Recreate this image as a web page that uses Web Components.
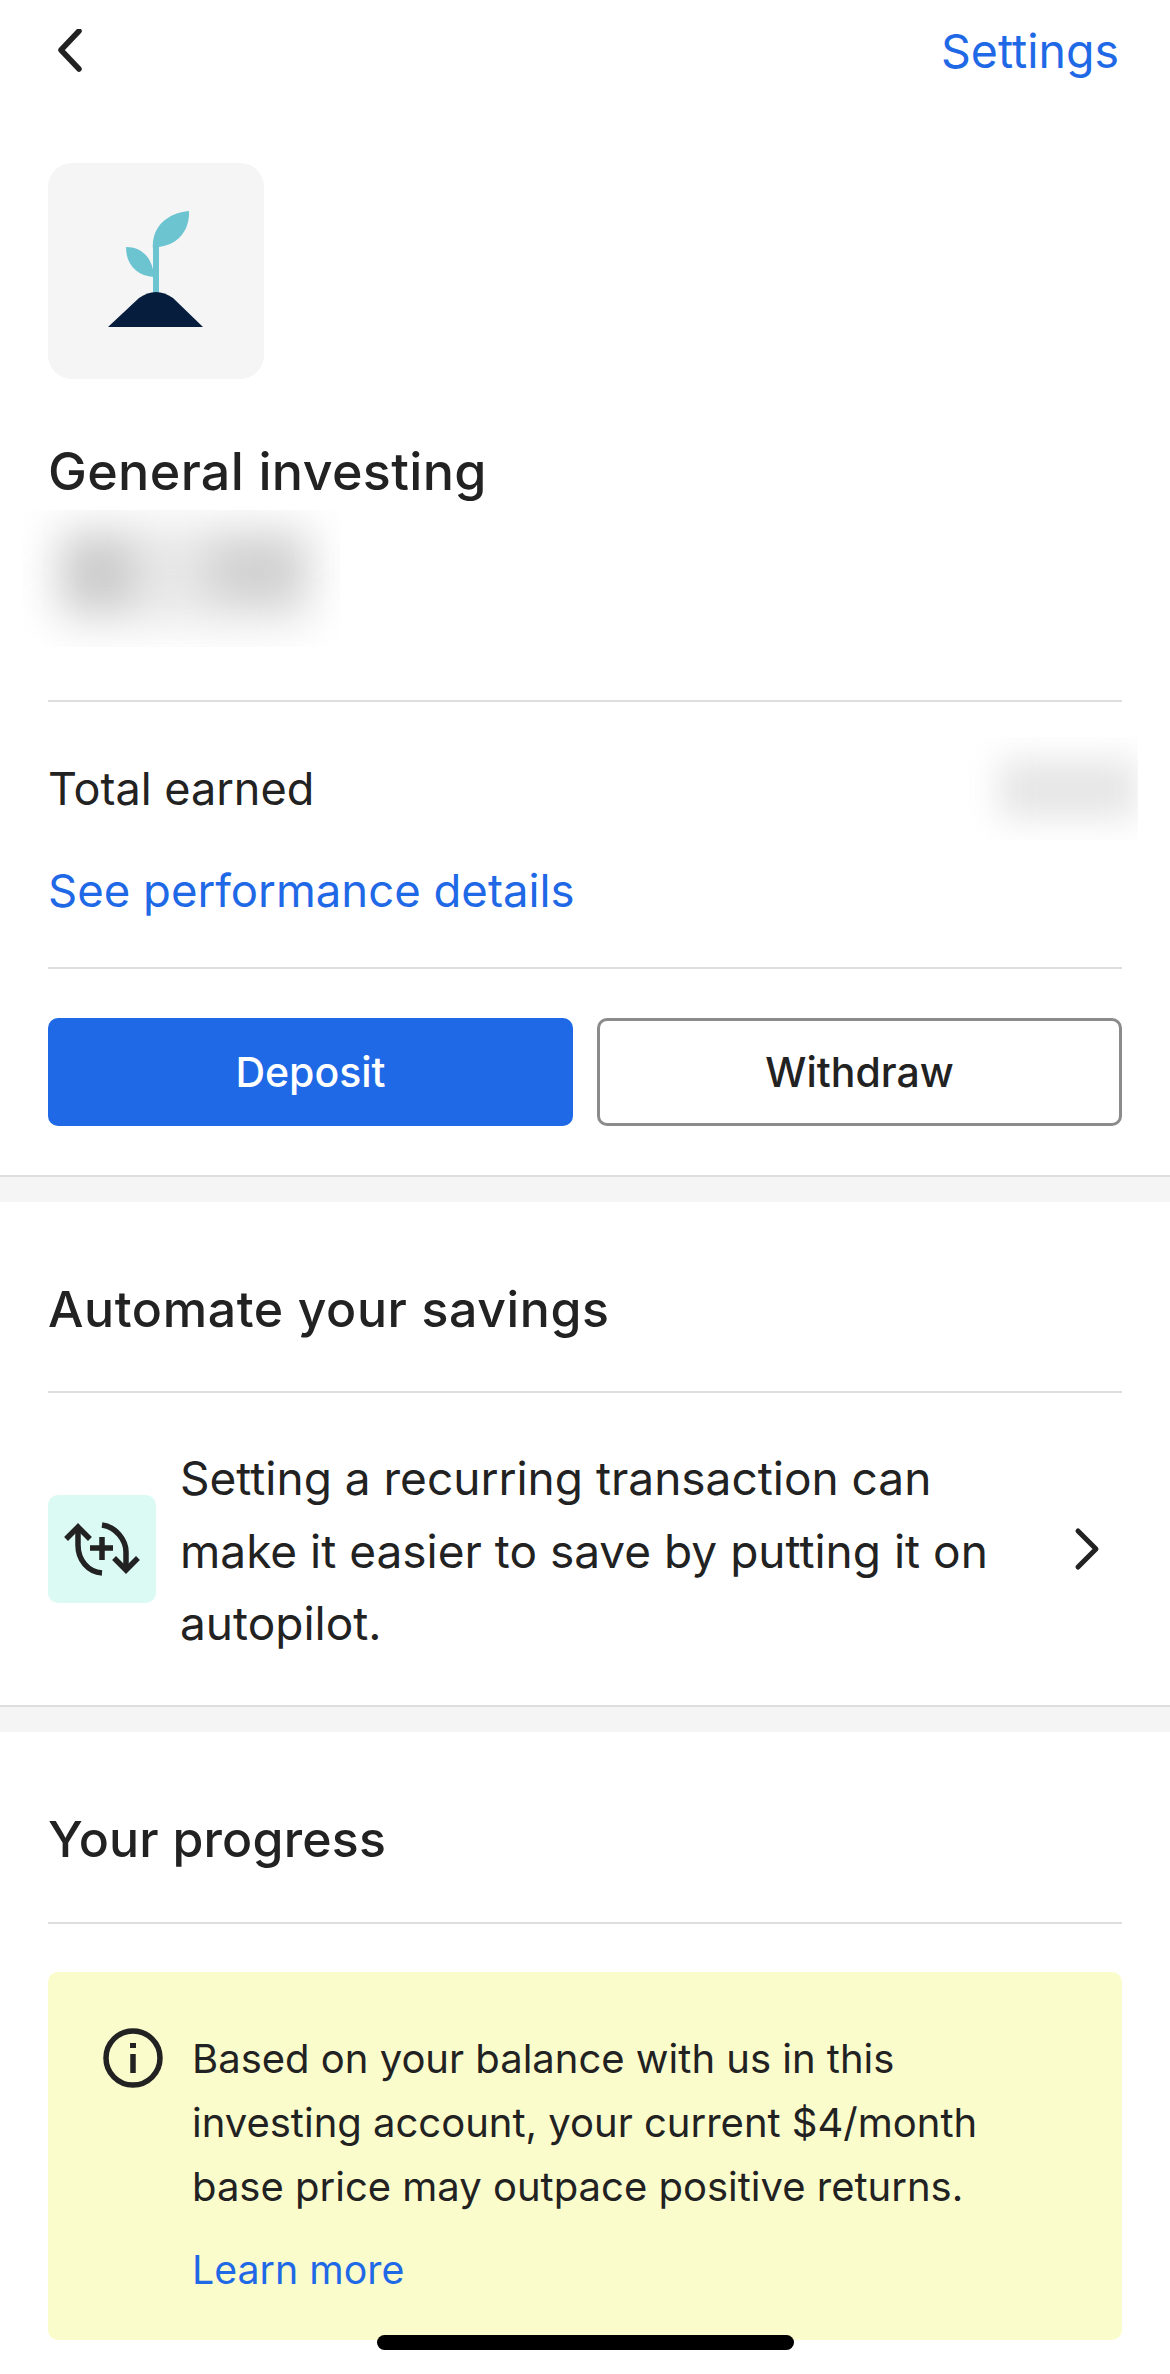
<!DOCTYPE html>
<html><head><meta charset="utf-8"><style>
html,body{margin:0;padding:0;background:#fff}
body{font-family:"Inter","Liberation Sans",sans-serif;color:#222}
</style></head><body>
<x-app>
  <x-nav></x-nav>
  <x-summary></x-summary>
  <x-band></x-band>
  <x-automate></x-automate>
  <x-band></x-band>
  <x-progress></x-progress>
</x-app>
<script>
const base=`*{box-sizing:border-box}
.rule{height:2px;background:#dedede}
.h{font-size:50px;font-weight:500;line-height:60px;color:#222;margin:0;letter-spacing:.6px}
.link{color:#1f69e6}`;
function def(name,html,css){
  customElements.define(name,class extends HTMLElement{
    constructor(){super();const r=this.attachShadow({mode:'open'});
      r.innerHTML=`<style>${base}${css}</style>${html}`;}
  });
}
def('x-app',`<slot></slot><div class="home"></div>`,`
:host{display:flex;flex-direction:column;width:1170px;height:2374px;overflow:hidden;position:relative;background:#fff}
.home{position:absolute;left:377px;top:2335px;width:417px;height:15px;border-radius:8px;background:#000;z-index:2}`);
def('x-nav',`<svg width="34" height="44" viewBox="0 0 34 44"><path d="M28 5 L10 24 L28 43" transform="translate(-1 -3)" fill="none" stroke="#222" stroke-width="5.5" stroke-linecap="round" stroke-linejoin="round"/></svg><span class="link">Settings</span>`,`
:host{display:flex;align-items:center;justify-content:space-between;box-sizing:border-box;height:103px;padding:0 51px 2px 52px;flex:none;font-size:46.5px}`);
def('x-summary',`
<div class="tile"><svg width="216" height="216" viewBox="48 163 216 216">
<rect x="153" y="245" width="6" height="55" fill="#6bc4d0"/>
<path d="M153 250C151 226 168 213 189 211C190 232 176 246 157 247Z" fill="#6bc4d0"/>
<path d="M126 247C142 247 153 258 154 277C137 276 126 265 126 247Z" fill="#6bc4d0"/>
<path d="M108 327L139 298Q156 286 173 298L203 327Z" fill="#071d3d"/></svg></div>
<h2 class="h title">General investing</h2>
<div class="bal"><i></i></div>
<div class="rule r1"></div>
<div class="row"><span>Total earned</span><div class="earn"><i></i></div></div>
<div class="see link">See performance details</div>
<div class="rule r2"></div>
<div class="btns"><x-btn primary>Deposit</x-btn><x-btn>Withdraw</x-btn></div>`,`
:host{display:block;padding:0 48px;flex:none;height:1072px}
.tile{width:216px;height:216px;margin-top:60px;background:#f5f5f5;border-radius:24px}
svg{display:block}
.title{margin-top:63px;font-size:52px;letter-spacing:.35px}
.bal,.earn{overflow:hidden}
.bal i,.earn i{display:block;width:100%;height:100%}
.bal{margin:8px 0 0 -25px;width:317px;height:137px}
.bal i{filter:blur(22px);background:
 linear-gradient(#cacaca,#cacaca) 38px 28px/72px 70px no-repeat,
 linear-gradient(#d0d0d0,#d0d0d0) 186px 28px/100px 64px no-repeat,
 linear-gradient(#e8e8e8,#e8e8e8) 36px 14px/250px 100px no-repeat}
.r1{margin-top:53px}
.row{margin-top:35px;height:103px;display:flex;align-items:center;justify-content:space-between;font-size:45px;margin-right:-16px}
.earn{width:175px;height:103px}
.earn i{filter:blur(17px);background:
 linear-gradient(#e6e6e6,#e6e6e6) 36px 22px/139px 60px no-repeat}
.see{font-size:45.5px;line-height:60px;margin-top:21px}
.r2{margin-top:46px}
.btns{margin-top:49px;display:grid;grid-template-columns:525px 525px;gap:24px}`);
def('x-btn',`<slot></slot>`,`
:host{display:flex;align-items:center;justify-content:center;height:108px;border-radius:10px;border:3px solid #8b8b8b;background:#fff;color:#222;font-size:41px;font-weight:500;box-sizing:border-box}
:host([primary]){background:#1f69e6;border-color:#1f69e6;color:#fff}`);
def('x-band',``,`:host{display:block;height:27px;background:#f5f5f5;border-top:2px solid #dedede;flex:none;box-sizing:border-box}`);
def('x-automate',`
<h2 class="h">Automate your savings</h2>
<div class="rule"></div>
<div class="body">
 <div class="ic"><svg width="108" height="108" viewBox="48 1495 108 108" fill="none" stroke="#222" stroke-width="5.5">
  <path d="M78 1527V1545C78 1560 88 1572 102 1573"/>
  <path d="M68 1537L78 1527L88 1537" stroke-linecap="square"/>
  <path d="M102 1525C116 1527 126 1540 126 1552V1568"/>
  <path d="M116 1560L126 1570L136 1560" stroke-linecap="square"/>
  <path d="M90 1548H113M102 1537V1560"/>
 </svg></div>
 <p>Setting a recurring transaction can make it easier to save by putting it on autopilot.</p>
 <svg class="chev" width="28" height="44" viewBox="0 0 28 44" fill="none" stroke="#222" stroke-width="5" stroke-linecap="round" stroke-linejoin="round"><path d="M5 4L23 22L5 40"/></svg>
</div>`,`
:host{display:block;padding:0 48px;flex:none;height:503px}
.h{margin-top:77px}
.rule{margin-top:52px}
.body{display:flex;align-items:center;height:312px}
.ic{width:108px;height:108px;border-radius:10px;background:#dbfaf4;flex:none}
svg{display:block}
p{margin:0 0 0 24px;padding-top:4px;font-size:46px;line-height:72.5px;width:830px;flex:none;color:#222}
.chev{margin-left:auto;margin-right:21px;flex:none}`);
def('x-progress',`
<h2 class="h pr">Your progress</h2>
<div class="rule"></div>
<div class="note">
 <svg width="60" height="60" viewBox="0 0 60 60" fill="none" stroke="#222"><circle cx="30" cy="30" r="27" stroke-width="5.5"/><path d="M30 26V45" stroke-width="5.5"/><path d="M30 15V20" stroke-width="6"/></svg>
 <div class="txt"><div>Based on your balance with us in this investing account, your current $4/month base price may outpace positive returns.</div><div class="link more">Learn more</div></div>
</div>`,`
:host{display:block;padding:0 48px;flex:none}
.h{margin-top:77px}
.pr{letter-spacing:.2px}
.rule{margin-top:53px}
.note{margin-top:48px;height:368px;border-radius:10px;background:#fbfccc;display:flex;padding:56px 0 0 55px;gap:29px}
svg{flex:none;display:block}
.txt{font-size:40px;line-height:64px;width:810px;margin-top:-1px;color:#222}
.more{margin-top:19px;font-size:39.3px}`);
</script>
</body></html>
